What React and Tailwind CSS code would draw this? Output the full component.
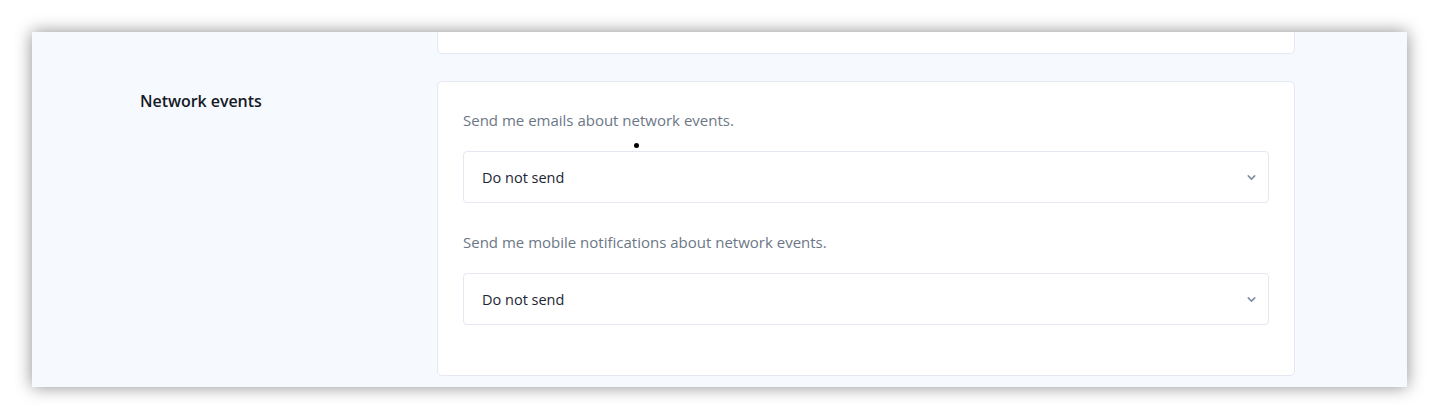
import { ChevronDown } from "lucide-react"

const font = { fontFamily: "'Open Sans', 'Liberation Sans', sans-serif" }

const SelectBox = ({ value }) => (
  <div className="h-[52px] w-full flex items-center justify-between pl-[18px] pr-[10px] bg-white border border-[#e4e8f2] rounded-[4px]">
    <span className="text-[14.5px] leading-5 text-[#1e2535] translate-y-[1px]">{value}</span>
    <ChevronDown className="h-[13px] w-[13px] text-[#7f8aa0]" strokeWidth={2.75} />
  </div>
)

export default function App() {
  return (
    <div className="min-h-screen bg-white p-8" style={font}>
      <div className="relative w-[1375px] h-[355px] overflow-hidden bg-[#f6f9fe] shadow-[0_0_16px_rgba(0,0,0,0.45)]">
        {/* previous section, cut off */}
        <div className="flex pl-[405px]">
          <div className="w-[858px] h-[22px] bg-white border-x border-b border-[#e4e8f2] rounded-b-[5px]" />
        </div>

        <div className="flex mt-[27px] pl-[108px]">
          <div className="w-[297px] pt-[10px]">
            <h3 className="text-[16px] leading-5 font-semibold text-[#141a26] tracking-[-0.05px]">Network events</h3>
          </div>
          <div className="w-[858px] bg-white border border-[#e4e8f2] rounded-[5px] px-[25px] pt-[28px] pb-[50px]">
            <p className="text-[15px] leading-5 text-[#6c7786]">Send me emails about network events.</p>
            <div className="mt-[21px]">
              <SelectBox value="Do not send" />
            </div>
            <p className="mt-[29px] text-[15px] leading-5 text-[#6c7786]">Send me mobile notifications about network events.</p>
            <div className="mt-[21px]">
              <SelectBox value="Do not send" />
            </div>
          </div>
        </div>

        {/* mouse pointer dot */}
        <div className="absolute left-[602px] top-[111px] h-[5px] w-[5px] rounded-full bg-black" />
      </div>
    </div>
  )
}
